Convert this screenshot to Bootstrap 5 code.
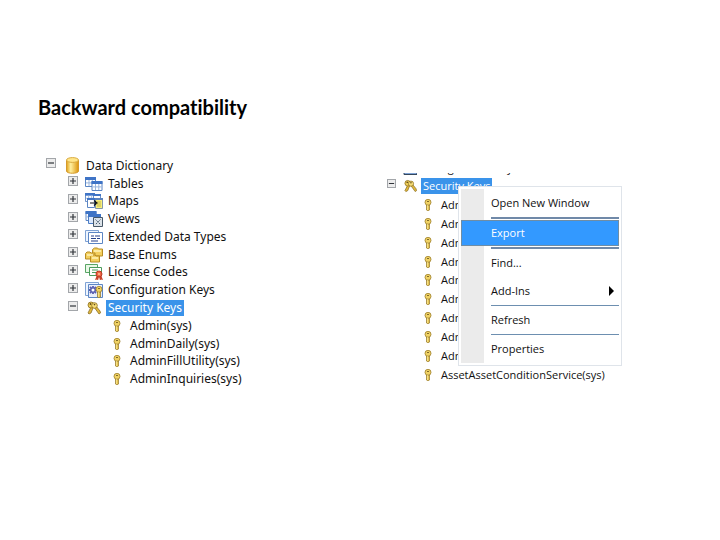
<!DOCTYPE html>
<html lang="en">
<head>
<meta charset="utf-8">
<meta name="viewport" content="width=device-width, initial-scale=1">
<title>Backward compatibility</title>
<link href="https://cdn.jsdelivr.net/npm/bootstrap@5.3.0/dist/css/bootstrap.min.css" rel="stylesheet">
<style>
body{background:#fff;color:#111;font-family:"Noto Sans","Open Sans",sans-serif;font-size:12px}
.page-title{font:700 20px/24px Lato,"Open Sans",sans-serif;font-variant-ligatures:none;color:#000;padding:95px 38px 0;margin:0}
.panes{padding-top:38px}
.pane-left{padding-left:46px}
.pane-right{padding:16px 0 0 27px}
.tree{line-height:16px;white-space:nowrap}
.tree-fill{display:grid;grid-auto-rows:1fr;min-height:231px}
.tree-small{font-family:"Open Sans",sans-serif;font-size:11px}
.tree-small.tree-fill{min-height:207px}
.node{display:flex;align-items:center}
.lvl1{padding-left:22px}
.lvl2{padding-left:67px}
.key-row{padding-left:37px}
.fold{width:10px;height:10px;flex:none;padding:0;border:1px solid #a3a6aa;background:#ececec;line-height:0;margin-bottom:5px}
.tree-small .fold{width:9px;height:9px}
.fold svg{display:block;width:100%;height:100%}
.ico{flex:none;display:block}
.root-ico{margin:0 7px 0 10px}
.node-ico{margin:0 3px 0 7px}
.key-ico{margin-right:7px}
.node-label{padding:0 2px}
.picked{background:#3a93ea;color:#fff}
.cut{height:4px;overflow:hidden;align-items:flex-end}
.cut .node-label{line-height:18px;padding-left:0}
.ctx{left:71px;top:13px;width:164px;min-width:0;padding:2px;border:1px solid #dfe4ea;border-radius:0;font:11px/16px "Open Sans",sans-serif;display:block}
.ctx-body{background:linear-gradient(90deg,#ebebeb 23px,transparent 23px)}
.ctx .dropdown-item{height:28px;padding:0 5px 0 30px;color:#111;background:none}
.ctx .active{height:26px;margin:1px 0;background:#3399ff;color:#fff;border:1px solid #6f8da5;padding-left:29px}
.rule{height:1px;margin:0 0 0 30px;border:0;background:#6d8fb0;opacity:1}
.rule-bold{height:2px;background:#7089a8}
</style>
<script src="https://cdn.jsdelivr.net/npm/bootstrap@5.3.0/dist/js/bootstrap.bundle.min.js"></script>
</head>
<body>
<svg width="0" height="0" class="position-absolute" aria-hidden="true">
<defs>
<linearGradient id="gold" x2="1"><stop stop-color="#e0a018"/><stop offset=".35" stop-color="#fff0a0"/><stop offset="1" stop-color="#dc950c"/></linearGradient>
<symbol id="plus" viewBox="0 0 8 8"><path d="M1 4h6M4 1v6" stroke="#30343a" stroke-width="1.2"/></symbol>
<symbol id="minus" viewBox="0 0 8 8"><path d="M1 4h6" stroke="#30343a" stroke-width="1.2"/></symbol>
<symbol id="db" viewBox="0 0 13 17"><path d="M.5 3v11c0 3 12 3 12 0V3" fill="url(#gold)" stroke="#d59a2c"/><ellipse cx="6.5" cy="3" rx="6" ry="2.4" fill="#ffe68a" stroke="#d9aa40"/></symbol>
<symbol id="grid" viewBox="0 0 11 10"><path d="M.5.5h10v9H.5z" fill="#fff" stroke="#5c86c4"/><path d="M0 0h11v3H0z" fill="#3f74c6"/><path d="M1 5.9h9M4 3v6M7.300 3v6" stroke="#9ab6dd"/></symbol>
<symbol id="tables" viewBox="0 0 18 16"><use href="#grid" width="11" height="10" x="0" y="1"/><use href="#grid" width="12" height="10" x="6" y="5"/></symbol>
<symbol id="maps" viewBox="0 0 18 16"><use href="#grid" width="10" height="9"/><path d="M8.500 1.500h7v8h-7z" fill="#fff" stroke="#6d92ca"/><path d="M8 1h8v2H8z" fill="#3f74c6"/><path d="M2.500 5.500h7v9h-7z" fill="#fff" stroke="#5c86c4"/><path d="M2 5h8v2H2z" fill="#3f74c6"/><path d="M10.500 5.500h7v10h-7z" fill="#f7ee7c" stroke="#8597a8"/><path d="M10 5h8v2h-8z" fill="#5d83bb"/><path d="M12 9h4M12 11h4M12 13h4" stroke="#c5b94a"/><path d="M5 10h6M9 7.500l3 2.500-3 2.500" fill="none" stroke="#111" stroke-width="1.2"/></symbol>
<symbol id="views" viewBox="0 0 18 16"><use href="#grid" width="12" height="10"/><path d="M3.500 3.500h12v9h-12z" fill="#dceaff" stroke="#4c7dc5"/><path d="M3 3h13v3H3z" fill="#3f74c6"/><path d="M8.500 6.500h9v9h-9z" fill="#dce3e9" stroke="#465767"/><path d="M10.500 8.500l5 5M15.500 8.500l-5 5" stroke="#40566d" stroke-dasharray="1.5 1"/></symbol>
<symbol id="edt" viewBox="0 0 18 14"><path d="M.5.5h13v11H.5z" fill="#eef5ff" stroke="#7fa2d4"/><path d="M3.500 2.500h14v11h-14z" fill="#fff" stroke="#5c86c4"/><path d="M6 6h3M10 6h5M6 8.500h5M12 8.500h3M6 11h7" stroke="#243f8c" stroke-width="1.2"/></symbol>
<symbol id="enums" viewBox="0 0 18 16"><g fill="#f3cf5e" stroke="#b88c22"><path d="M7.500 2.500l2-1.500h3l1 1h4v7h-10z"/><path d="M.5 6.500L2 5h3l1 1h4v6H.5z"/><path d="M5.500 9.500L7 8h3l1 1h3.500v6h-9z"/></g><path d="M9 4h7M2 8h6M7 11h6" stroke="#fff3b8" stroke-width="1.3"/></symbol>
<symbol id="license" viewBox="0 0 18 16"><path d="M.5.5h12v8H.5z" fill="#e9f8e7" stroke="#58a565"/><path d="M4.500 3.500h12v8h-12z" fill="#fff" stroke="#4b9b5b"/><path d="M7 6h6M7 8.500h5" stroke="#4b9b5b"/><path d="M12 11l-2 5 2-.5 1 1 1-4 1 4 1-1 2 .5-2-5z" fill="#c9432a"/><circle cx="14" cy="10" r="3" fill="#ee6543" stroke="#ba3a25"/><circle cx="14" cy="10" r="1" fill="#ffc49a"/></symbol>
<symbol id="keyshape" viewBox="0 0 8 12"><path d="M2.500 6h3v5L4 12l-1.500-1z" fill="#e2bd45" stroke="#917628" stroke-width=".7"/><circle cx="4" cy="3.300" r="3" fill="#f0d264" stroke="#9c7e2a" stroke-width=".8"/><path d="M3.200 2.500h1.600" stroke="#65501a" stroke-width="1.1"/><path d="M3.700 6v5" stroke="#fff2a6" stroke-width=".8"/></symbol>
<symbol id="config" viewBox="0 0 18 16"><path d="M.5.5h13v13H.5z" fill="#eef5ff" stroke="#7fa2d4"/><path d="M3.500 2.500h14v13h-14z" fill="#e9eefb" stroke="#5c86c4"/><path d="M8 4v8M4 8h8M5 5l6 6M11 5l-6 6" stroke="#575cae" stroke-width="1.8"/><circle cx="8" cy="8" r="1.500" fill="#fff"/><use href="#keyshape" x="10" y="4" width="8" height="12"/></symbol>
<symbol id="keys" viewBox="0 0 14 14"><path d="M4 6L1 12l1 1 2-1 2-5zM7 6l5 7 1.500-1-.5-2-4-5z" fill="#e2b93c" stroke="#8c7028" stroke-width=".8"/><circle cx="4" cy="4" r="3" fill="#efcf5a" stroke="#8c6d1c" stroke-width=".8"/><circle cx="7.500" cy="4.500" r="2.800" fill="#f6dd78" stroke="#8c6d1c" stroke-width=".8"/><circle cx="3.500" cy="3" r=".9" fill="#624c18"/><circle cx="7.500" cy="3.600" r=".8" fill="#624c18"/></symbol>
</defs></svg>

<main>
<h1 class="page-title">Backward compatibility</h1>
<div class="row g-0 panes">
<section class="col-6 pane-left" aria-label="Data dictionary">
<ul class="list-unstyled tree tree-fill mb-0" id="dictionary">
<li class="node"><button class="fold" aria-label="Collapse Data Dictionary"><svg><use href="#minus"/></svg></button><svg class="ico root-ico" width="13" height="17"><use href="#db"/></svg><span>Data Dictionary</span></li>
<li class="node lvl1"><button class="fold" aria-label="Expand Tables"><svg><use href="#plus"/></svg></button><svg class="ico node-ico" width="18" height="16"><use href="#tables"/></svg><span class="node-label">Tables</span></li>
<li class="node lvl1"><button class="fold" aria-label="Expand Maps"><svg><use href="#plus"/></svg></button><svg class="ico node-ico" width="18" height="16"><use href="#maps"/></svg><span class="node-label">Maps</span></li>
<li class="node lvl1"><button class="fold" aria-label="Expand Views"><svg><use href="#plus"/></svg></button><svg class="ico node-ico" width="18" height="16"><use href="#views"/></svg><span class="node-label">Views</span></li>
<li class="node lvl1"><button class="fold" aria-label="Expand Extended Data Types"><svg><use href="#plus"/></svg></button><svg class="ico node-ico" width="18" height="14"><use href="#edt"/></svg><span class="node-label">Extended Data Types</span></li>
<li class="node lvl1"><button class="fold" aria-label="Expand Base Enums"><svg><use href="#plus"/></svg></button><svg class="ico node-ico" width="18" height="16"><use href="#enums"/></svg><span class="node-label">Base Enums</span></li>
<li class="node lvl1"><button class="fold" aria-label="Expand License Codes"><svg><use href="#plus"/></svg></button><svg class="ico node-ico" width="18" height="16"><use href="#license"/></svg><span class="node-label">License Codes</span></li>
<li class="node lvl1"><button class="fold" aria-label="Expand Configuration Keys"><svg><use href="#plus"/></svg></button><svg class="ico node-ico" width="18" height="16"><use href="#config"/></svg><span class="node-label">Configuration Keys</span></li>
<li class="node lvl1"><button class="fold" aria-label="Collapse Security Keys"><svg><use href="#minus"/></svg></button><svg class="ico node-ico" width="18" height="14"><use href="#keys"/></svg><span class="node-label picked">Security Keys</span></li>
<li class="node lvl2"><svg class="ico key-ico" width="8" height="12"><use href="#keyshape"/></svg><span class="node-label">Admin(sys)</span></li>
<li class="node lvl2"><svg class="ico key-ico" width="8" height="12"><use href="#keyshape"/></svg><span class="node-label">AdminDaily(sys)</span></li>
<li class="node lvl2"><svg class="ico key-ico" width="8" height="12"><use href="#keyshape"/></svg><span class="node-label">AdminFillUtility(sys)</span></li>
<li class="node lvl2"><svg class="ico key-ico" width="8" height="12"><use href="#keyshape"/></svg><span class="node-label">AdminInquiries(sys)</span></li>
</ul>
</section>
<section class="col-6 pane-right" aria-label="Security keys">
<div class="position-relative">
<div class="node cut tree tree-small" aria-hidden="true"><svg class="ico ms-3 me-1" width="14" height="4"><path d="M1 0v1.500h13V0" fill="#7fa2d4" stroke="#34475c"/></svg><span class="node-label">Configuration Keys</span></div>
<ul class="list-unstyled tree tree-small tree-fill mb-0">
<li class="node"><button class="fold" aria-label="Collapse Security Keys"><svg><use href="#minus"/></svg></button><svg class="ico ms-2 me-1" width="13" height="14"><use href="#keys"/></svg><span class="node-label picked">Security Keys</span></li>
<li class="node key-row"><svg class="ico key-ico" width="8" height="12"><use href="#keyshape"/></svg><span class="node-label">Admin(sys)</span></li>
<li class="node key-row"><svg class="ico key-ico" width="8" height="12"><use href="#keyshape"/></svg><span class="node-label">Admin(sys)</span></li>
<li class="node key-row"><svg class="ico key-ico" width="8" height="12"><use href="#keyshape"/></svg><span class="node-label">Admin(sys)</span></li>
<li class="node key-row"><svg class="ico key-ico" width="8" height="12"><use href="#keyshape"/></svg><span class="node-label">Admin(sys)</span></li>
<li class="node key-row"><svg class="ico key-ico" width="8" height="12"><use href="#keyshape"/></svg><span class="node-label">Admin(sys)</span></li>
<li class="node key-row"><svg class="ico key-ico" width="8" height="12"><use href="#keyshape"/></svg><span class="node-label">Admin(sys)</span></li>
<li class="node key-row"><svg class="ico key-ico" width="8" height="12"><use href="#keyshape"/></svg><span class="node-label">Admin(sys)</span></li>
<li class="node key-row"><svg class="ico key-ico" width="8" height="12"><use href="#keyshape"/></svg><span class="node-label">Admin(sys)</span></li>
<li class="node key-row"><svg class="ico key-ico" width="8" height="12"><use href="#keyshape"/></svg><span class="node-label">Admin(sys)</span></li>
<li class="node key-row"><svg class="ico key-ico" width="8" height="12"><use href="#keyshape"/></svg><span class="node-label">AssetAssetConditionService(sys)</span></li>
</ul>
<div class="dropdown-menu show ctx">
<div class="ctx-body">
<button class="dropdown-item">Open New Window</button>
<hr class="rule rule-bold">
<button class="dropdown-item active">Export</button>
<hr class="rule rule-bold">
<button class="dropdown-item">Find...</button>
<button class="dropdown-item d-flex align-items-center justify-content-between">Add-Ins<svg width="5" height="10"><path d="M0 0l5 5-5 5z" fill="#000"/></svg></button>
<hr class="rule">
<button class="dropdown-item">Refresh</button>
<hr class="rule">
<button class="dropdown-item">Properties</button>
</div>
</div>
</div>
</section>
</div>
</main>
</body>
</html>
